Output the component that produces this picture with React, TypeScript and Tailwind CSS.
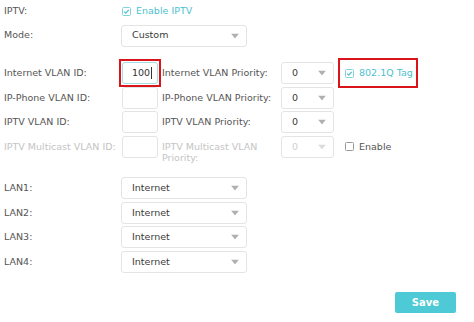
import React from "react";

const Arrow = ({ disabled }: { disabled?: boolean }) => (
  <svg
    width="8"
    height="5"
    viewBox="0 0 8 5"
    className="absolute right-[7px] top-1/2 -translate-y-1/2"
  >
    <path d="M0 0 L8 0 L4 5 Z" fill={disabled ? "#dcdcdc" : "#b0b0b0"} />
  </svg>
);

const Select = ({
  value,
  wide,
  disabled,
}: {
  value: string;
  wide?: boolean;
  disabled?: boolean;
}) => (
  <div
    className={`relative flex h-[22px] items-center rounded-[3px] border border-[#e4e4e4] bg-white pl-[10px] ${
      wide ? "w-[126px]" : "w-[53px]"
    } ${disabled ? "text-[#cfcfcf]" : "text-[#3a3a3a]"}`}
  >
    {value}
    <Arrow disabled={disabled} />
  </div>
);

const Check = ({ checked }: { checked?: boolean }) => (
  <svg width="9" height="9" viewBox="0 0 9 9" className="shrink-0">
    <rect
      x="0.5"
      y="0.5"
      width="8"
      height="8"
      rx="1"
      fill="white"
      stroke={checked ? "#7fd3de" : "#9a9a9a"}
    />
    {checked && (
      <path
        d="M2.2 4.6 L3.8 6.1 L6.8 2.8"
        fill="none"
        stroke="#4cbfcf"
        strokeWidth="1.2"
      />
    )}
  </svg>
);

const Box = ({ children }: { children?: React.ReactNode }) => (
  <div className="flex h-[22px] w-[36px] items-center rounded-[3px] border border-[#e4e4e4] bg-white">
    {children}
  </div>
);

export default function App() {
  return (
    <div
      className="h-[322px] w-[474px] bg-white text-[9.5px] text-[#555]"
      style={{ fontFamily: '"DejaVu Sans", Verdana, sans-serif' }}
    >
      <div className="flex h-[23px] items-center pl-[4px]">
        <div className="w-[118px]">IPTV:</div>
        <div className="flex items-center gap-[5px] text-[#4dbfcf]">
          <Check checked />
          <span>Enable IPTV</span>
        </div>
      </div>

      <div className="flex h-[25px] items-center pl-[4px]">
        <div className="w-[117px]">Mode:</div>
        <Select value="Custom" wide />
      </div>

      <div className="mt-[13px]">
        <div className="flex h-[24.5px] items-center pl-[4px]">
          <div className="w-[118px]">Internet VLAN ID:</div>
          <div className="relative">
            <div className="flex h-[22px] w-[36px] items-center rounded-[3px] border border-[#a9dde5] bg-white pl-[9px] text-[#333]">
              100<span className="ml-px h-[12px] w-px bg-[#333]" />
            </div>
            <div className="absolute -inset-[3px] border-2 border-[#d9141b]" />
          </div>
          <div className="ml-[4px] w-[119px]">Internet VLAN Priority:</div>
          <Select value="0" />
          <div className="relative ml-[11px] flex items-center gap-[5px] text-[#4dbfcf]">
            <Check checked />
            <span>802.1Q Tag</span>
            <div className="absolute -bottom-[8px] -left-[7px] -right-[5px] -top-[8px] border-2 border-[#d9141b]" />
          </div>
        </div>

        <div className="flex h-[24.5px] items-center pl-[4px]">
          <div className="w-[118px]">IP-Phone VLAN ID:</div>
          <Box />
          <div className="ml-[4px] w-[119px]">IP-Phone VLAN Priority:</div>
          <Select value="0" />
        </div>

        <div className="flex h-[24.5px] items-center pl-[4px]">
          <div className="w-[118px]">IPTV VLAN ID:</div>
          <Box />
          <div className="ml-[4px] w-[119px]">IPTV VLAN Priority:</div>
          <Select value="0" />
        </div>

        <div className="flex h-[24.5px] items-center pl-[4px] text-[#c4c4c4]">
          <div className="w-[118px]">IPTV Multicast VLAN ID:</div>
          <Box />
          <div className="ml-[4px] w-[119px] self-start pt-[6px] leading-[11.5px]">
            IPTV Multicast VLAN
            <br />
            Priority:
          </div>
          <Select value="0" disabled />
          <div className="ml-[11px] flex items-center gap-[5px] text-[#555]">
            <Check />
            <span>Enable</span>
          </div>
        </div>
      </div>

      <div className="mt-[17px]">
        {["LAN1:", "LAN2:", "LAN3:", "LAN4:"].map((l) => (
          <div key={l} className="flex h-[24.5px] items-center pl-[4px]">
            <div className="w-[117px]">{l}</div>
            <Select value="Internet" wide />
          </div>
        ))}
      </div>

      <div className="mt-[18px] flex justify-end pr-[18px]">
        <button className="h-[21px] w-[61px] rounded-[2px] bg-[#4dcad6] text-[10px] font-bold text-white">
          Save
        </button>
      </div>
    </div>
  );
}
